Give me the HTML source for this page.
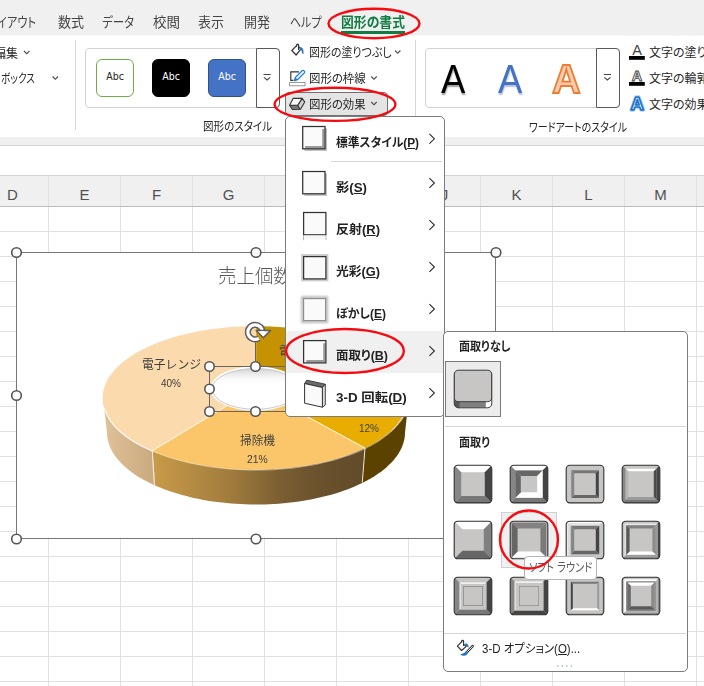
<!DOCTYPE html><html lang="ja"><head><meta charset="utf-8"><title>Excel</title><style>
html,body{margin:0;padding:0}
body{width:704px;height:686px;position:relative;overflow:hidden;background:#fff;
 font-family:"Liberation Sans","Noto Sans CJK JP",sans-serif;font-size:12px;color:#333}
.a{position:absolute}
.t{position:absolute;white-space:nowrap;transform-origin:0 50%}
.k{display:inline-block;transform-origin:0 50%}
.hdr{position:absolute;font-size:15px;color:#505050;top:186.4px;width:41px;text-align:center;line-height:17px;font-family:"Liberation Sans",sans-serif}
u{text-decoration:underline;text-underline-offset:1px}
svg{position:absolute;left:0;top:0;overflow:visible}
</style></head><body>
<div class="a" style="left:0;top:0;width:704px;height:35px;background:#f0f0f0"></div><div class="a" style="left:0;top:35px;width:704px;height:1px;background:#f7f7f7"></div>
<div class="a" style="left:0;top:137px;width:704px;height:8px;background:#f0f0f0"></div>
<div class="a" style="left:0;top:145px;width:704px;height:1px;background:#d2d2d2"></div>
<div class="a" style="left:0;top:175px;width:704px;height:1px;background:#d4d4d4"></div>
<div class="a" style="left:0;top:176px;width:704px;height:30px;background:#f0f0f0"></div>
<div class="a" style="left:0;top:206px;width:704px;height:1px;background:#bcbcbc"></div>
<div class="a" style="left:48px;top:176px;width:1px;height:30px;background:#e2e2e2"></div><div class="a" style="left:48px;top:207px;width:1px;height:479px;background:#e1e1e1"></div><div class="a" style="left:120px;top:176px;width:1px;height:30px;background:#e2e2e2"></div><div class="a" style="left:120px;top:207px;width:1px;height:479px;background:#e1e1e1"></div><div class="a" style="left:192px;top:176px;width:1px;height:30px;background:#e2e2e2"></div><div class="a" style="left:192px;top:207px;width:1px;height:479px;background:#e1e1e1"></div><div class="a" style="left:264px;top:176px;width:1px;height:30px;background:#e2e2e2"></div><div class="a" style="left:264px;top:207px;width:1px;height:479px;background:#e1e1e1"></div><div class="a" style="left:336px;top:176px;width:1px;height:30px;background:#e2e2e2"></div><div class="a" style="left:336px;top:207px;width:1px;height:479px;background:#e1e1e1"></div><div class="a" style="left:408px;top:176px;width:1px;height:30px;background:#e2e2e2"></div><div class="a" style="left:408px;top:207px;width:1px;height:479px;background:#e1e1e1"></div><div class="a" style="left:480px;top:176px;width:1px;height:30px;background:#e2e2e2"></div><div class="a" style="left:480px;top:207px;width:1px;height:479px;background:#e1e1e1"></div><div class="a" style="left:552px;top:176px;width:1px;height:30px;background:#e2e2e2"></div><div class="a" style="left:552px;top:207px;width:1px;height:479px;background:#e1e1e1"></div><div class="a" style="left:624px;top:176px;width:1px;height:30px;background:#e2e2e2"></div><div class="a" style="left:624px;top:207px;width:1px;height:479px;background:#e1e1e1"></div><div class="a" style="left:696px;top:176px;width:1px;height:30px;background:#e2e2e2"></div><div class="a" style="left:696px;top:207px;width:1px;height:479px;background:#e1e1e1"></div><div class="a" style="left:0;top:231px;width:704px;height:1px;background:#e1e1e1"></div><div class="a" style="left:0;top:256px;width:704px;height:1px;background:#e1e1e1"></div><div class="a" style="left:0;top:281px;width:704px;height:1px;background:#e1e1e1"></div><div class="a" style="left:0;top:306px;width:704px;height:1px;background:#e1e1e1"></div><div class="a" style="left:0;top:331px;width:704px;height:1px;background:#e1e1e1"></div><div class="a" style="left:0;top:356px;width:704px;height:1px;background:#e1e1e1"></div><div class="a" style="left:0;top:381px;width:704px;height:1px;background:#e1e1e1"></div><div class="a" style="left:0;top:406px;width:704px;height:1px;background:#e1e1e1"></div><div class="a" style="left:0;top:431px;width:704px;height:1px;background:#e1e1e1"></div><div class="a" style="left:0;top:456px;width:704px;height:1px;background:#e1e1e1"></div><div class="a" style="left:0;top:481px;width:704px;height:1px;background:#e1e1e1"></div><div class="a" style="left:0;top:506px;width:704px;height:1px;background:#e1e1e1"></div><div class="a" style="left:0;top:531px;width:704px;height:1px;background:#e1e1e1"></div><div class="a" style="left:0;top:556px;width:704px;height:1px;background:#e1e1e1"></div><div class="a" style="left:0;top:581px;width:704px;height:1px;background:#e1e1e1"></div><div class="a" style="left:0;top:606px;width:704px;height:1px;background:#e1e1e1"></div><div class="a" style="left:0;top:631px;width:704px;height:1px;background:#e1e1e1"></div><div class="a" style="left:0;top:656px;width:704px;height:1px;background:#e1e1e1"></div><div class="a" style="left:0;top:681px;width:704px;height:1px;background:#e1e1e1"></div>
<div class="hdr" style="left:-8px">D</div>
<div class="hdr" style="left:64px">E</div>
<div class="hdr" style="left:136px">F</div>
<div class="hdr" style="left:208px">G</div>
<div class="hdr" style="left:280px">H</div>
<div class="hdr" style="left:352px">I</div>
<div class="hdr" style="left:424px">J</div>
<div class="hdr" style="left:496px">K</div>
<div class="hdr" style="left:568px">L</div>
<div class="hdr" style="left:640px">M</div>
<div id="t1" class="t" style="left:-3px;top:12.6px;height:20px;line-height:20px;font-size:13.3px;color:#444;transform:scaleX(0.8421);font-feature-settings:'palt' 1;">イアウト</div>
<div id="t2" class="t" style="left:58px;top:12.6px;height:20px;line-height:20px;font-size:13.3px;color:#444;transform:scaleX(0.9777);font-feature-settings:'palt' 1;">数式</div>
<div id="t3" class="t" style="left:102px;top:12.6px;height:20px;line-height:20px;font-size:13.3px;color:#444;transform:scaleX(0.8609);font-feature-settings:'palt' 1;">データ</div>
<div id="t4" class="t" style="left:153px;top:12.6px;height:20px;line-height:20px;font-size:13.3px;color:#444;transform:scaleX(1.0153);font-feature-settings:'palt' 1;">校閲</div>
<div id="t5" class="t" style="left:198px;top:12.6px;height:20px;line-height:20px;font-size:13.3px;color:#444;transform:scaleX(0.9777);font-feature-settings:'palt' 1;">表示</div>
<div id="t6" class="t" style="left:244px;top:12.6px;height:20px;line-height:20px;font-size:13.3px;color:#444;transform:scaleX(0.9777);font-feature-settings:'palt' 1;">開発</div>
<div id="t7" class="t" style="left:289.5px;top:12.6px;height:20px;line-height:20px;font-size:13.3px;color:#444;transform:scaleX(0.8256);font-feature-settings:'palt' 1;">ヘルプ</div>
<div id="t8" class="t" style="left:341px;top:12.6px;height:20px;line-height:20px;font-size:13.3px;color:#107c41;font-weight:bold;transform:scaleX(0.9651);font-feature-settings:'palt' 1;">図形の書式</div>
<div class="a" style="left:341px;top:31px;width:64px;height:3px;background:#107c41"></div>
<div id="t9" class="t" style="left:-6px;top:44.7px;height:18px;line-height:18px;font-size:12px;color:#262626;transform:scaleX(0.9993);font-feature-settings:'palt' 1;">編集</div>
<div id="t10" class="t" style="left:1px;top:70.2px;height:18px;line-height:18px;font-size:12px;color:#262626;transform:scaleX(0.8050);font-feature-settings:'palt' 1;">ボックス</div>
<div class="a" style="left:75px;top:40px;width:1px;height:90px;background:#d6d6d6"></div>
<div class="a" style="left:415px;top:40px;width:1px;height:90px;background:#d6d6d6"></div>
<div class="a" style="left:85px;top:48px;width:193px;height:58px;border:1px solid #d2d2d2;border-radius:4px;background:#fff"></div>
<div class="a" style="left:256px;top:48px;width:22px;height:58px;border:1px solid #5a5a5a;border-radius:0 4px 4px 0;background:#fff"></div>
<div class="a" style="left:96px;top:59px;width:36px;height:36px;border:1px solid #70ad47;border-radius:6px;background:#fff;color:#222;font-size:10.5px;line-height:33.5px;text-align:center;font-family:'DejaVu Sans Condensed','Liberation Sans',sans-serif">Abc</div>
<div class="a" style="left:152px;top:59px;width:36px;height:36px;border:1px solid #000;border-radius:6px;background:#000;color:#fff;font-size:10.5px;line-height:33.5px;text-align:center;font-family:'DejaVu Sans Condensed','Liberation Sans',sans-serif">Abc</div>
<div class="a" style="left:208px;top:59px;width:36px;height:36px;border:1px solid #2f528f;border-radius:6px;background:#4472c4;color:#fff;font-size:10.5px;line-height:33.5px;text-align:center;font-family:'DejaVu Sans Condensed','Liberation Sans',sans-serif">Abc</div>
<div id="t11" class="t" style="left:203px;top:118.2px;height:18px;line-height:18px;font-size:12px;color:#262626;transform:scaleX(0.8772);font-feature-settings:'palt' 1;">図形のスタイル</div>
<div id="t12" class="t" style="left:309.3px;top:44.2px;height:18px;line-height:18px;font-size:12px;color:#262626;transform:scaleX(0.9135);font-feature-settings:'palt' 1;">図形の塗りつぶし</div>
<div id="t13" class="t" style="left:309.3px;top:70.2px;height:18px;line-height:18px;font-size:12px;color:#262626;transform:scaleX(0.9517);font-feature-settings:'palt' 1;">図形の枠線</div>
<div class="a" style="left:285px;top:92px;width:103px;height:24px;border:1px solid #707070;border-radius:4px;background:#e4e4e4;box-sizing:border-box"></div>
<div id="t14" class="t" style="left:309.3px;top:96.0px;height:18px;line-height:18px;font-size:12px;color:#262626;transform:scaleX(0.9517);font-feature-settings:'palt' 1;">図形の効果</div>
<div class="a" style="left:425px;top:48px;width:193px;height:58px;border:1px solid #d2d2d2;border-radius:4px;background:#fff"></div>
<div class="a" style="left:596px;top:48px;width:22px;height:58px;border:1px solid #5a5a5a;border-radius:0 4px 4px 0;background:#fff"></div>
<div id="t15" class="t" style="left:441.2px;top:48.7px;height:61px;line-height:61px;font-size:40.5px;color:#000;font-family:'Liberation Sans',sans-serif;transform:scaleX(.9);text-shadow:.5px 1.5px 1.5px rgba(0,0,0,.38)">A</div>
<div id="t16" class="t" style="left:498.2px;top:48.7px;height:61px;line-height:61px;font-size:40.5px;color:#4472c4;font-family:'Liberation Sans',sans-serif;transform:scaleX(.9);text-shadow:.5px 1.5px 1.5px rgba(60,90,160,.38)">A</div>
<div id="t17" class="t" style="left:552.2px;top:48.7px;height:61px;line-height:61px;font-size:40.5px;color:#f8cbad;font-weight:bold;font-family:'Liberation Sans',sans-serif;transform:scaleX(.98);-webkit-text-stroke:1.8px #ed7d31">A</div>
<div id="t18" class="t" style="left:529px;top:119.2px;height:18px;line-height:18px;font-size:12px;color:#262626;transform:scaleX(0.8294);font-feature-settings:'palt' 1;">ワードアートのスタイル</div>
<div id="t19" class="t" style="left:649px;top:43.6px;height:18px;line-height:18px;font-size:12px;color:#262626;font-feature-settings:'palt' 1;">文字の塗りつぶし</div>
<div id="t20" class="t" style="left:649px;top:69.7px;height:18px;line-height:18px;font-size:12px;color:#262626;font-feature-settings:'palt' 1;">文字の輪郭</div>
<div id="t21" class="t" style="left:649px;top:95.7px;height:18px;line-height:18px;font-size:12px;color:#262626;font-feature-settings:'palt' 1;">文字の効果</div>
<svg width="704" height="686" viewBox="0 0 704 686">
<path d="M24 51 L26.7 53.8 L29.4 51" fill="none" stroke="#444" stroke-width="1.1"/>
<path d="M52.6 76.5 L55.300000000000004 79.3 L58.0 76.5" fill="none" stroke="#444" stroke-width="1.1"/>
<path d="M395 50.5 L397.7 53.3 L400.4 50.5" fill="none" stroke="#444" stroke-width="1.1"/>
<path d="M371.3 76.5 L374.0 79.3 L376.7 76.5" fill="none" stroke="#444" stroke-width="1.1"/>
<path d="M371.3 102 L374.0 104.8 L376.7 102" fill="none" stroke="#444" stroke-width="1.1"/>
<path d="M263.5 74.5 h7.2" stroke="#444" stroke-width="1"/>
<path d="M264.0 77.3 L267.1 80 L270.2 77.3" fill="none" stroke="#444" stroke-width="1.1"/>
<path d="M603.8 74.5 h7.2" stroke="#444" stroke-width="1"/>
<path d="M604.3 77.3 L607.4 80 L610.5 77.3" fill="none" stroke="#444" stroke-width="1.1"/>
<path d="M296.6 45.6 L291.8 50.5 L296.1 55 L301 48.9 L298.6 46.8" fill="none" stroke="#333" stroke-width="1.2" stroke-linejoin="round" stroke-linecap="round"/>
<path d="M296.6 46.2 V45.2 Q296.6 44.2 297.6 44.2 Q298.6 44.2 298.6 45.2 V49.4" fill="none" stroke="#333" stroke-width="1.2" stroke-linecap="round"/>
<path d="M300.6 47.6 Q303.4 48 303 53.6 Q302.2 50 300.4 49 Z" fill="#1a72c7" stroke="#1a72c7" stroke-width=".9" stroke-linejoin="round"/>
<path d="M299 71.8 H290.8 V80.4 H293.4" fill="none" stroke="#333" stroke-width="1.15"/>
<path d="M294.4 80.8 l1 -3.4 l6.8 -6.8 c1.1-1 3.2 1.1 2.2 2.2 l-6.8 6.8 z" fill="#e6f1fb" stroke="#1a78d0" stroke-width="1.2" stroke-linejoin="round"/>
<path d="M294.4 80.8 l1 -3.4 l2.4 2.4 z" fill="#1a78d0"/>
<rect x="289.6" y="82.4" width="15.4" height="3.4" fill="#fff" stroke="#8a8a8a" stroke-width=".9"/>
<path d="M289.6 105.3 L297.7 105.3 L299.9 109.3 L292.4 109.5 Z" fill="#787878" stroke="#333" stroke-width="1.1" stroke-linejoin="round"/>
<path d="M297.7 105.3 L302.1 98.4 L304.7 101.9 L300.5 109.3 L299.9 109.3 Z" fill="#d0d0d0" stroke="#333" stroke-width="1.1" stroke-linejoin="round"/>
<path d="M293.1 98.4 L302.1 98.4 L297.7 105.3 L289.6 105.3 Z" fill="#fafafa" stroke="#333" stroke-width="1.1" stroke-linejoin="round"/>
<rect x="629" y="56" width="15.8" height="3.8" fill="#000"/><rect x="629" y="82" width="15.8" height="3.8" fill="#000"/>
<text x="637" y="54.6" font-family="Liberation Sans, sans-serif" font-size="14.5" text-anchor="middle" fill="#444">A</text>
<text x="637" y="80.6" font-family="Liberation Sans, sans-serif" font-size="14.5" font-weight="bold" text-anchor="middle" fill="#fff" stroke="#444" stroke-width=".9">A</text>
<text x="637.2" y="110" font-family="Liberation Sans, sans-serif" font-size="18.5" font-weight="bold" text-anchor="middle" fill="#fff" stroke="#1e7fd6" stroke-width="3.4" stroke-opacity=".35" stroke-linejoin="round">A</text>
<text x="637.2" y="110" font-family="Liberation Sans, sans-serif" font-size="18.5" font-weight="bold" text-anchor="middle" fill="#fff" stroke="#1873cc" stroke-width="1.7" stroke-linejoin="round">A</text>
</svg>
<div class="a" style="left:16px;top:252px;width:480px;height:287px;background:#fff;border:1px solid #767676;box-sizing:border-box"></div>
<svg width="704" height="686" viewBox="0 0 704 686">
<defs>
<linearGradient id="gL" gradientUnits="userSpaceOnUse" x1="103" y1="0" x2="154" y2="0"><stop offset="0" stop-color="#e0c299"/><stop offset="1" stop-color="#caa97e"/></linearGradient>
<linearGradient id="gM" gradientUnits="userSpaceOnUse" x1="153" y1="0" x2="364" y2="0"><stop offset="0" stop-color="#c99b49"/><stop offset=".35" stop-color="#a37d3e"/><stop offset=".6" stop-color="#7b5f33"/><stop offset=".8" stop-color="#69512d"/><stop offset="1" stop-color="#634b2a"/></linearGradient>
<linearGradient id="gH" x1="0" y1="0" x2="0" y2="1"><stop offset="0" stop-color="#cfcfcf"/><stop offset=".08" stop-color="#e2e2e2"/><stop offset=".22" stop-color="#f7f7f7"/><stop offset=".36" stop-color="#fff"/><stop offset="1" stop-color="#fff"/></linearGradient>
<clipPath id="cf"><rect x="17" y="253" width="478" height="285"/></clipPath>
</defs>
<g clip-path="url(#cf)">
<path d="M103.0 397.4 L103.0 398.6 L103.1 399.9 L103.2 401.1 L103.4 402.4 L103.6 403.6 L103.8 404.8 L104.1 406.1 L104.5 407.3 L104.8 408.5 L105.3 409.8 L105.7 411.0 L106.3 412.2 L106.8 413.4 L107.4 414.6 L108.1 415.8 L108.8 417.0 L109.5 418.2 L110.3 419.4 L111.1 420.6 L112.0 421.7 L112.9 422.9 L113.9 424.1 L114.9 425.2 L115.9 426.4 L117.0 427.5 L118.1 428.6 L119.3 429.7 L120.5 430.8 L121.7 431.9 L123.0 433.0 L124.4 434.1 L125.7 435.1 L127.1 436.2 L128.6 437.2 L130.0 438.3 L131.6 439.3 L133.1 440.3 L134.7 441.3 L136.3 442.3 L138.0 443.2 L139.7 444.2 L141.4 445.1 L143.2 446.0 L145.0 446.9 L146.8 447.8 L148.7 448.7 L150.6 449.6 L152.5 450.4 L155.2 485.5 L153.3 484.7 L151.5 483.8 L149.7 482.9 L147.9 482.0 L146.1 481.1 L144.4 480.2 L142.7 479.3 L141.1 478.3 L139.5 477.4 L137.9 476.4 L136.3 475.4 L134.8 474.4 L133.3 473.4 L131.9 472.3 L130.5 471.3 L129.1 470.2 L127.8 469.2 L126.5 468.1 L125.3 467.0 L124.0 465.9 L122.9 464.8 L121.7 463.7 L120.6 462.6 L119.6 461.5 L118.6 460.3 L117.6 459.2 L116.7 458.0 L115.8 456.8 L114.9 455.7 L114.1 454.5 L113.4 453.3 L112.6 452.1 L112.0 450.9 L111.3 449.7 L110.7 448.5 L110.2 447.3 L109.7 446.1 L109.2 444.9 L108.8 443.6 L108.4 442.4 L108.1 441.2 L107.8 439.9 L107.6 438.7 L107.4 437.5 L107.2 436.2 L107.1 435.0 L107.0 433.7 L107.0 432.5Z" fill="url(#gL)"/>
<path d="M152.5 450.4 L156.2 452.0 L159.9 453.4 L163.8 454.8 L167.7 456.2 L171.8 457.5 L175.9 458.7 L180.1 459.9 L184.4 461.0 L188.8 462.1 L193.2 463.1 L197.7 464.0 L202.2 464.8 L206.9 465.6 L211.5 466.3 L216.2 466.9 L221.0 467.5 L225.8 468.0 L230.6 468.4 L235.4 468.7 L240.3 469.0 L245.1 469.2 L250.0 469.3 L254.9 469.4 L259.8 469.4 L264.7 469.3 L269.6 469.1 L274.5 468.9 L279.3 468.6 L284.1 468.2 L288.9 467.7 L293.7 467.2 L298.4 466.6 L303.1 465.9 L307.7 465.2 L312.3 464.3 L316.8 463.5 L321.3 462.5 L325.7 461.5 L330.0 460.4 L334.3 459.3 L338.4 458.1 L342.5 456.8 L346.5 455.5 L350.4 454.1 L354.2 452.6 L357.9 451.1 L361.5 449.5 L365.0 447.9 L362.2 483.0 L358.8 484.6 L355.2 486.2 L351.6 487.7 L347.9 489.2 L344.1 490.6 L340.2 491.9 L336.3 493.2 L332.2 494.4 L328.1 495.5 L323.9 496.6 L319.6 497.6 L315.3 498.6 L310.8 499.4 L306.4 500.3 L301.9 501.0 L297.3 501.7 L292.7 502.3 L288.1 502.8 L283.4 503.3 L278.7 503.7 L274.0 504.0 L269.2 504.2 L264.5 504.4 L259.7 504.5 L255.0 504.5 L250.2 504.4 L245.4 504.3 L240.7 504.1 L235.9 503.8 L231.2 503.5 L226.5 503.1 L221.9 502.6 L217.3 502.0 L212.7 501.4 L208.1 500.7 L203.7 499.9 L199.2 499.1 L194.8 498.2 L190.5 497.2 L186.3 496.1 L182.1 495.0 L178.0 493.8 L174.0 492.6 L170.0 491.3 L166.2 489.9 L162.4 488.5 L158.8 487.1 L155.2 485.5Z" fill="url(#gM)"/>
<path d="M365.0 447.9 L366.7 447.1 L368.4 446.2 L370.1 445.4 L371.7 444.5 L373.3 443.6 L374.9 442.7 L376.5 441.8 L378.0 440.9 L379.4 439.9 L380.9 439.0 L382.3 438.0 L383.7 437.1 L385.0 436.1 L386.4 435.1 L387.6 434.1 L388.9 433.1 L390.1 432.1 L391.3 431.0 L392.4 430.0 L393.5 429.0 L394.6 427.9 L395.6 426.8 L396.6 425.8 L397.6 424.7 L398.5 423.6 L399.4 422.5 L400.2 421.4 L401.0 420.3 L401.8 419.2 L402.5 418.1 L403.2 417.0 L403.9 415.9 L404.5 414.7 L405.1 413.6 L405.6 412.5 L406.1 411.3 L406.6 410.2 L407.0 409.0 L407.4 407.9 L407.7 406.7 L408.0 405.6 L408.3 404.4 L408.5 403.2 L408.7 402.1 L408.8 400.9 L408.9 399.7 L409.0 398.6 L409.0 397.4 L405.0 432.5 L405.0 433.7 L404.9 434.8 L404.8 436.0 L404.7 437.2 L404.5 438.3 L404.3 439.5 L404.0 440.7 L403.7 441.8 L403.4 443.0 L403.0 444.1 L402.6 445.3 L402.2 446.4 L401.7 447.6 L401.2 448.7 L400.6 449.8 L400.0 451.0 L399.4 452.1 L398.7 453.2 L398.0 454.3 L397.2 455.4 L396.5 456.5 L395.6 457.6 L394.8 458.7 L393.9 459.8 L392.9 460.9 L392.0 461.9 L391.0 463.0 L389.9 464.1 L388.8 465.1 L387.7 466.1 L386.6 467.2 L385.4 468.2 L384.2 469.2 L382.9 470.2 L381.7 471.2 L380.4 472.2 L379.0 473.1 L377.6 474.1 L376.2 475.0 L374.8 476.0 L373.3 476.9 L371.8 477.8 L370.3 478.7 L368.7 479.6 L367.1 480.5 L365.5 481.3 L363.8 482.2 L362.2 483.0Z" fill="#5c4200"/>
<path d="M255.5 388.5 L256 326 A153 72 0 0 0 152 451 Z" fill="#fbdaad"/>
<path d="M255.5 388.5 L152 451 A153 72 0 0 0 365 448 Z" fill="#fbc669"/>
<path d="M255.5 388.5 L365 448 A153 72 0 0 0 407.5 399 Z" fill="#e9ad02"/>
<path d="M255.5 388.5 L407.5 399 A153 72 0 0 0 256 326 Z" fill="#c59302"/>
<path d="M104.4 408.5 A153 72 0 0 0 152 451" fill="none" stroke="#fff" stroke-opacity=".9" stroke-width="1.1"/>
<path d="M152 451 A153 72 0 0 0 408.9 401" fill="none" stroke="#fff" stroke-opacity=".45" stroke-width="1"/>
<path d="M255.5 388.5 L152 451" stroke="#fff" stroke-opacity=".85" stroke-width="1" fill="none"/>
<path d="M255.5 388.5 L365 448" stroke="#fff" stroke-opacity=".85" stroke-width="1" fill="none"/>
<path d="M255.5 388.5 L407.5 399" stroke="#fff" stroke-opacity=".85" stroke-width="1" fill="none"/>
<path d="M255.5 388.5 L256 326" stroke="#fbe6c8" stroke-opacity=".6" stroke-width="1" fill="none"/>
<path d="M152.3 451 L154.3 485" stroke="#fff" stroke-opacity=".8" stroke-width="1" fill="none"/>
<path d="M365 448 L362.3 482.5" stroke="#fff" stroke-opacity=".8" stroke-width="1" fill="none"/>
<ellipse cx="255.5" cy="388.6" rx="45.4" ry="22.3" fill="#fff"/>
<ellipse cx="255.5" cy="388.9" rx="43.4" ry="20.4" fill="url(#gH)" stroke="#c4c4c4" stroke-width=".9"/>
</g></svg>
<div id="t22" class="t" style="left:218.4px;top:262.6px;height:28px;line-height:28px;font-size:18.8px;color:#595959;transform:scaleX(0.9824);font-feature-settings:'palt' 1;font-weight:300;">売上個数</div>
<div id="t23" class="t" style="left:141.75px;top:356.0px;height:18px;line-height:18px;font-size:12px;color:#404040;transform:scaleX(0.9831);">電子レンジ</div>
<div id="t24" class="t" style="left:161px;top:375.3px;height:16px;line-height:16px;font-size:10.5px;color:#404040;transform:scaleX(0.9517);font-family:'Liberation Sans',sans-serif;">40%</div>
<div id="t25" class="t" style="left:240px;top:432.0px;height:18px;line-height:18px;font-size:12px;color:#404040;transform:scaleX(0.9718);">掃除機</div>
<div id="t26" class="t" style="left:246.8px;top:451.3px;height:16px;line-height:16px;font-size:10.5px;color:#404040;transform:scaleX(0.9850);font-family:'Liberation Sans',sans-serif;">21%</div>
<div id="t27" class="t" style="left:358.6px;top:420.2px;height:16px;line-height:16px;font-size:10.5px;color:#404040;transform:scaleX(0.9517);font-family:'Liberation Sans',sans-serif;">12%</div>
<div id="t28" class="t" style="left:279px;top:342.5px;height:18px;line-height:18px;font-size:12px;color:#404040;">電気ポット</div>
<svg width="704" height="686" viewBox="0 0 704 686">
<rect x="209.5" y="366.5" width="92" height="45" fill="none" stroke="#666" stroke-width="1"/>
<path d="M255.5 366 V342" stroke="#666" stroke-width="1"/>
<circle cx="209.5" cy="366.5" r="4.7" fill="#fff" stroke="#555" stroke-width="1.6"/>
<circle cx="209.5" cy="389" r="4.7" fill="#fff" stroke="#555" stroke-width="1.6"/>
<circle cx="209.5" cy="411.5" r="4.7" fill="#fff" stroke="#555" stroke-width="1.6"/>
<circle cx="255.5" cy="366.5" r="4.7" fill="#fff" stroke="#555" stroke-width="1.6"/>
<circle cx="255.5" cy="411.5" r="4.7" fill="#fff" stroke="#555" stroke-width="1.6"/>
<circle cx="301.5" cy="366.5" r="4.7" fill="#fff" stroke="#555" stroke-width="1.6"/>
<circle cx="301.5" cy="389" r="4.7" fill="#fff" stroke="#555" stroke-width="1.6"/>
<circle cx="301.5" cy="411.5" r="4.7" fill="#fff" stroke="#555" stroke-width="1.6"/>
<path d="M262.5 332.6 A7.3 7.3 0 1 0 258.9 338.4" fill="none" stroke="#5e5e5e" stroke-width="6.2"/>
<path d="M262.5 332.6 A7.3 7.3 0 1 0 258.9 338.4" fill="none" stroke="#fff" stroke-width="3.2"/>
<path d="M256.2 330.4 H270.6 L263.3 337.8 Z" fill="#fff" stroke="#5e5e5e" stroke-width="1.5" stroke-linejoin="round"/>
<path d="M260.8 331 h3.4 v2.4 h-3.4z" fill="#fff"/>
<circle cx="16.5" cy="252.5" r="4.8" fill="#fff" stroke="#555" stroke-width="1.6"/>
<circle cx="256" cy="252.5" r="4.8" fill="#fff" stroke="#555" stroke-width="1.6"/>
<circle cx="496" cy="252.5" r="4.8" fill="#fff" stroke="#555" stroke-width="1.6"/>
<circle cx="16.5" cy="395.5" r="4.8" fill="#fff" stroke="#555" stroke-width="1.6"/>
<circle cx="496" cy="395.5" r="4.8" fill="#fff" stroke="#555" stroke-width="1.6"/>
<circle cx="16.5" cy="539" r="4.8" fill="#fff" stroke="#555" stroke-width="1.6"/>
<circle cx="256" cy="539" r="4.8" fill="#fff" stroke="#555" stroke-width="1.6"/>
<circle cx="496" cy="539" r="4.8" fill="#fff" stroke="#555" stroke-width="1.6"/>
</svg>
<div class="a" style="left:285px;top:116px;width:160px;height:301px;background:#fff;border:1px solid #7c7c7c;border-radius:5px;box-sizing:border-box"></div>
<div class="a" style="left:286px;top:331px;width:158px;height:42px;background:#f0f0f0"></div>
<div class="a" style="left:331px;top:161px;width:111px;height:1px;background:#d6d6d6"></div>
<div id="t29" class="t" style="left:336px;top:133.9px;height:18px;line-height:18px;font-size:12px;color:#222;font-weight:bold;transform:scaleX(0.9795);font-feature-settings:'palt' 1;">標準スタイル(<u>P</u>)</div>
<div id="t30" class="t" style="left:336px;top:178.9px;height:18px;line-height:18px;font-size:12px;color:#222;font-weight:bold;transform:scaleX(1.1065);font-feature-settings:'palt' 1;">影(<u>S</u>)</div>
<div id="t31" class="t" style="left:336px;top:220.9px;height:18px;line-height:18px;font-size:12px;color:#222;font-weight:bold;transform:scaleX(1.0818);font-feature-settings:'palt' 1;">反射(<u>R</u>)</div>
<div id="t32" class="t" style="left:336px;top:262.9px;height:18px;line-height:18px;font-size:12px;color:#222;font-weight:bold;transform:scaleX(1.0642);font-feature-settings:'palt' 1;">光彩(<u>G</u>)</div>
<div id="t33" class="t" style="left:336px;top:304.9px;height:18px;line-height:18px;font-size:12px;color:#222;font-weight:bold;transform:scaleX(0.9941);font-feature-settings:'palt' 1;">ぼかし(<u>E</u>)</div>
<div id="t34" class="t" style="left:336px;top:346.6px;height:18px;line-height:18px;font-size:12px;color:#222;font-weight:bold;transform:scaleX(1.0374);font-feature-settings:'palt' 1;">面取り(<u>B</u>)</div>
<div id="t35" class="t" style="left:336px;top:388.6px;height:18px;line-height:18px;font-size:12px;color:#222;font-weight:bold;transform:scaleX(1.1169);font-feature-settings:'palt' 1;">3-D 回転(<u>D</u>)</div>
<svg width="704" height="686" viewBox="0 0 704 686">
<defs><filter id="bl" x="-20%" y="-20%" width="140%" height="140%"><feGaussianBlur stdDeviation="1"/></filter></defs>
<rect x="304.4" y="128.3" width="22.6" height="22.6" fill="#bdbdbd"/>
<rect x="302.7" y="126.5" width="22.3" height="22.3" fill="#fafafa"/>
<path d="M322.2 129 h2.4 v19.4 h-19.6 v-2.5 h17.2 z" fill="#9a9a9a"/>
<rect x="302.7" y="126.5" width="22.3" height="22.3" fill="none" stroke="#333" stroke-width="1.25"/>
<rect x="304.4" y="173.3" width="22.6" height="22.6" fill="#c2c2c2"/>
<rect x="302.7" y="171.5" width="22.3" height="22.3" fill="#fafafa"/>
<rect x="302.7" y="171.5" width="22.3" height="22.3" fill="none" stroke="#333" stroke-width="1.25"/>
<rect x="303.6" y="212.5" width="22.3" height="22.3" fill="#fafafa"/>
<rect x="303.6" y="212.5" width="22.3" height="22.3" fill="none" stroke="#333" stroke-width="1.25"/>
<path d="M303.6 235.6 v4.6 M325.9 235.6 v4.6" stroke="#b0b0b0" stroke-width="1"/><rect x="304.1" y="235.5" width="21.3" height="4" fill="#f7f7f7"/>
<rect x="301.1" y="254.1" width="27.3" height="27.3" fill="#cdcdcb"/>
<rect x="303.6" y="256.6" width="22.3" height="22.3" fill="#fafafa"/>
<rect x="303.6" y="256.6" width="22.3" height="22.3" fill="none" stroke="#333" stroke-width="1.25"/>
<rect x="302.6" y="297.6" width="24" height="24" fill="none" stroke="#bdbdbd" stroke-width="3" filter="url(#bl)"/>
<rect x="303.6" y="298.6" width="22" height="22" fill="#fafafa" stroke="#8c8c8c" stroke-width="1.1"/>
<rect x="303.6" y="340.6" width="22.3" height="22.3" fill="#fafafa"/>
<path d="M323.2 343.2 h2.3 v19.2 h-19.2 v-2.4 h16.9 z" fill="#9a9a9a"/>
<rect x="303.6" y="340.6" width="22.3" height="22.3" fill="none" stroke="#333" stroke-width="1.25"/>
<path d="M304.6 383.5 L306.8 380.2 L325.3 384.2 L322.4 387.5 Z" fill="#6b6b6b" stroke="#333" stroke-width=".9" stroke-linejoin="round"/>
<path d="M322.4 387.5 L325.3 384.2 L325.3 405 L322.4 407.2 Z" fill="#dedede" stroke="#333" stroke-width=".9" stroke-linejoin="round"/>
<path d="M304.6 383.5 L322.4 387.5 L322.4 407.2 L304.6 403.2 Z" fill="#fafafa" stroke="#333" stroke-width="1" stroke-linejoin="round"/>
<path d="M429.4 133.9 L434.4 138.8 L429.4 143.70000000000002" fill="none" stroke="#333" stroke-width="1.15"/>
<path d="M429.4 178.1 L434.4 183 L429.4 187.9" fill="none" stroke="#333" stroke-width="1.15"/>
<path d="M429.4 220.1 L434.4 225 L429.4 229.9" fill="none" stroke="#333" stroke-width="1.15"/>
<path d="M429.4 262.1 L434.4 267 L429.4 271.9" fill="none" stroke="#333" stroke-width="1.15"/>
<path d="M429.4 304.1 L434.4 309 L429.4 313.9" fill="none" stroke="#333" stroke-width="1.15"/>
<path d="M429.4 346.1 L434.4 351 L429.4 355.9" fill="none" stroke="#333" stroke-width="1.15"/>
<path d="M429.4 388.1 L434.4 393 L429.4 397.9" fill="none" stroke="#333" stroke-width="1.15"/>
</svg>
<div class="a" style="left:443px;top:331px;width:245px;height:341px;background:#fff;border:1px solid #7c7c7c;border-radius:5px;box-sizing:border-box"></div>
<div id="t36" class="t" style="left:459px;top:338.2px;height:18px;line-height:18px;font-size:12px;color:#222;font-weight:bold;transform:scaleX(0.9238);font-feature-settings:'palt' 1;">面取りなし</div>
<div class="a" style="left:445px;top:361px;width:56px;height:56px;background:#ececec;border:1px solid #7a7a7a;box-sizing:border-box"></div>
<div class="a" style="left:445px;top:426px;width:241px;height:1px;background:#d6d6d6"></div>
<div id="t37" class="t" style="left:459px;top:433.8px;height:18px;line-height:18px;font-size:12px;color:#222;font-weight:bold;transform:scaleX(0.9262);font-feature-settings:'palt' 1;">面取り</div>
<div class="a" style="left:501px;top:512px;width:56px;height:56px;background:#f0f0f0;border:1px solid #cfcfcf;box-sizing:border-box"></div>
<svg width="704" height="686" viewBox="0 0 704 686">
<clipPath id="bc1"><rect x="454.2" y="465.3" width="37.6" height="37.6" rx="3.6"/></clipPath>
<g clip-path="url(#bc1)">
<rect x="454.2" y="465.3" width="37.6" height="37.6" fill="#c7c6c4"/>
<path d="M454.2 465.3 L491.8 465.3 L484.8 472.3 L461.2 472.3Z" fill="#ffffff"/>
<path d="M491.8 465.3 L491.8 502.90000000000003 L484.8 495.90000000000003 L484.8 472.3Z" fill="#444444"/>
<path d="M491.8 502.90000000000003 L454.2 502.90000000000003 L461.2 495.90000000000003 L484.8 495.90000000000003Z" fill="#777777"/>
<path d="M454.2 502.90000000000003 L454.2 465.3 L461.2 472.3 L461.2 495.90000000000003Z" fill="#868686"/>
</g>
<rect x="454.2" y="465.3" width="37.6" height="37.6" rx="3.6" fill="none" stroke="#303030" stroke-width="1.1"/>
<clipPath id="bc2"><rect x="510.2" y="465.3" width="37.6" height="37.6" rx="3.6"/></clipPath>
<g clip-path="url(#bc2)">
<rect x="510.2" y="465.3" width="37.6" height="37.6" fill="#c7c6c4"/>
<path d="M510.2 465.3 L547.8 465.3 L542.5999999999999 470.5 L515.4 470.5Z" fill="#ffffff"/>
<path d="M547.8 465.3 L547.8 502.90000000000003 L542.5999999999999 497.70000000000005 L542.5999999999999 470.5Z" fill="#444444"/>
<path d="M547.8 502.90000000000003 L510.2 502.90000000000003 L515.4 497.70000000000005 L542.5999999999999 497.70000000000005Z" fill="#777777"/>
<path d="M510.2 502.90000000000003 L510.2 465.3 L515.4 470.5 L515.4 497.70000000000005Z" fill="#868686"/>
<path d="M515.4 470.5 L542.5999999999999 470.5 L537.1999999999999 475.90000000000003 L520.8 475.90000000000003Z" fill="#666666"/>
<path d="M542.5999999999999 470.5 L542.5999999999999 497.70000000000005 L537.1999999999999 492.3 L537.1999999999999 475.90000000000003Z" fill="#ffffff"/>
<path d="M542.5999999999999 497.70000000000005 L515.4 497.70000000000005 L520.8 492.3 L537.1999999999999 492.3Z" fill="#ffffff"/>
<path d="M515.4 497.70000000000005 L515.4 470.5 L520.8 475.90000000000003 L520.8 492.3Z" fill="#666666"/>
</g>
<rect x="510.2" y="465.3" width="37.6" height="37.6" rx="3.6" fill="none" stroke="#303030" stroke-width="1.1"/>
<clipPath id="bc3"><rect x="566.2" y="465.3" width="37.6" height="37.6" rx="3.6"/></clipPath>
<g clip-path="url(#bc3)">
<rect x="566.2" y="465.3" width="37.6" height="37.6" fill="#c7c6c4"/>
<path d="M571.2 470.3 L598.8000000000001 470.3 L595.8000000000001 473.3 L574.2 473.3Z" fill="#777777"/>
<path d="M598.8000000000001 470.3 L598.8000000000001 497.90000000000003 L595.8000000000001 494.90000000000003 L595.8000000000001 473.3Z" fill="#444444"/>
<path d="M598.8000000000001 497.90000000000003 L571.2 497.90000000000003 L574.2 494.90000000000003 L595.8000000000001 494.90000000000003Z" fill="#666666"/>
<path d="M571.2 497.90000000000003 L571.2 470.3 L574.2 473.3 L574.2 494.90000000000003Z" fill="#868686"/>
</g>
<rect x="566.2" y="465.3" width="37.6" height="37.6" rx="3.6" fill="none" stroke="#303030" stroke-width="1.1"/>
<clipPath id="bc4"><rect x="622.2" y="465.3" width="37.6" height="37.6" rx="3.6"/></clipPath>
<g clip-path="url(#bc4)">
<rect x="622.2" y="465.3" width="37.6" height="37.6" fill="#c7c6c4"/>
<path d="M622.2 465.3 L659.8000000000001 465.3 L656.4000000000001 468.7 L625.6 468.7Z" fill="#c7c6c4"/>
<path d="M659.8000000000001 465.3 L659.8000000000001 502.90000000000003 L656.4000000000001 499.50000000000006 L656.4000000000001 468.7Z" fill="#444444"/>
<path d="M659.8000000000001 502.90000000000003 L622.2 502.90000000000003 L625.6 499.50000000000006 L656.4000000000001 499.50000000000006Z" fill="#777777"/>
<path d="M622.2 502.90000000000003 L622.2 465.3 L625.6 468.7 L625.6 499.50000000000006Z" fill="#868686"/>
<path d="M625.6 468.7 L656.4000000000001 468.7 L653.8000000000001 471.3 L628.2 471.3Z" fill="#ffffff"/>
<path d="M656.4000000000001 468.7 L656.4000000000001 499.50000000000006 L653.8000000000001 496.90000000000003 L653.8000000000001 471.3Z" fill="#4a4a4a"/>
<path d="M656.4000000000001 499.50000000000006 L625.6 499.50000000000006 L628.2 496.90000000000003 L653.8000000000001 496.90000000000003Z" fill="#9a9a9a"/>
<path d="M625.6 499.50000000000006 L625.6 468.7 L628.2 471.3 L628.2 496.90000000000003Z" fill="#b4b4b4"/>
</g>
<rect x="622.2" y="465.3" width="37.6" height="37.6" rx="3.6" fill="none" stroke="#303030" stroke-width="1.1"/>
<clipPath id="bc5"><rect x="454.2" y="521.2" width="37.6" height="37.6" rx="3.6"/></clipPath>
<g clip-path="url(#bc5)">
<rect x="454.2" y="521.2" width="37.6" height="37.6" fill="#c7c6c4"/>
<path d="M454.2 521.2 L491.8 521.2 L483.8 529.2 L462.2 529.2Z" fill="#ffffff"/>
<path d="M491.8 521.2 L491.8 558.8000000000001 L483.8 550.8000000000001 L483.8 529.2Z" fill="#808080"/>
<path d="M491.8 558.8000000000001 L454.2 558.8000000000001 L462.2 550.8000000000001 L483.8 550.8000000000001Z" fill="#666666"/>
<path d="M454.2 558.8000000000001 L454.2 521.2 L462.2 529.2 L462.2 550.8000000000001Z" fill="#c7c6c4"/>
</g>
<rect x="454.2" y="521.2" width="37.6" height="37.6" rx="3.6" fill="none" stroke="#303030" stroke-width="1.1"/>
<clipPath id="bc6"><rect x="510.2" y="521.2" width="37.6" height="37.6" rx="3.6"/></clipPath>
<g clip-path="url(#bc6)">
<rect x="510.2" y="521.2" width="37.6" height="37.6" fill="#c7c6c4"/>
<path d="M510.2 521.2 L547.8 521.2 L546.4 522.6 L511.59999999999997 522.6Z" fill="#e2e2e2"/>
<path d="M547.8 521.2 L547.8 558.8000000000001 L546.4 557.4000000000001 L546.4 522.6Z" fill="#cfcfcf"/>
<path d="M547.8 558.8000000000001 L510.2 558.8000000000001 L511.59999999999997 557.4000000000001 L546.4 557.4000000000001Z" fill="#e2e2e2"/>
<path d="M510.2 558.8000000000001 L510.2 521.2 L511.59999999999997 522.6 L511.59999999999997 557.4000000000001Z" fill="#cfcfcf"/>
<path d="M511.59999999999997 522.6 L546.4 522.6 L540.4 528.6 L517.6 528.6Z" fill="#828282"/>
<path d="M546.4 522.6 L546.4 557.4000000000001 L540.4 551.4000000000001 L540.4 528.6Z" fill="#7a7a7a"/>
<path d="M546.4 557.4000000000001 L511.59999999999997 557.4000000000001 L517.6 551.4000000000001 L540.4 551.4000000000001Z" fill="#ffffff"/>
<path d="M511.59999999999997 557.4000000000001 L511.59999999999997 522.6 L517.6 528.6 L517.6 551.4000000000001Z" fill="#666666"/>
</g>
<rect x="510.2" y="521.2" width="37.6" height="37.6" rx="3.6" fill="none" stroke="#303030" stroke-width="1.1"/>
<clipPath id="bc7"><rect x="566.2" y="521.2" width="37.6" height="37.6" rx="3.6"/></clipPath>
<g clip-path="url(#bc7)">
<rect x="566.2" y="521.2" width="37.6" height="37.6" fill="#c7c6c4"/>
<path d="M566.2 521.2 L603.8000000000001 521.2 L601.4000000000001 523.6 L568.6 523.6Z" fill="#ffffff"/>
<path d="M603.8000000000001 521.2 L603.8000000000001 558.8000000000001 L601.4000000000001 556.4000000000001 L601.4000000000001 523.6Z" fill="#c7c6c4"/>
<path d="M603.8000000000001 558.8000000000001 L566.2 558.8000000000001 L568.6 556.4000000000001 L601.4000000000001 556.4000000000001Z" fill="#c7c6c4"/>
<path d="M566.2 558.8000000000001 L566.2 521.2 L568.6 523.6 L568.6 556.4000000000001Z" fill="#ececec"/>
<path d="M568.6 523.6 L601.4000000000001 523.6 L599.2 525.8000000000001 L570.8000000000001 525.8000000000001Z" fill="#e6e6e6"/>
<path d="M601.4000000000001 523.6 L601.4000000000001 556.4000000000001 L599.2 554.2 L599.2 525.8000000000001Z" fill="#c7c6c4"/>
<path d="M601.4000000000001 556.4000000000001 L568.6 556.4000000000001 L570.8000000000001 554.2 L599.2 554.2Z" fill="#c7c6c4"/>
<path d="M568.6 556.4000000000001 L568.6 523.6 L570.8000000000001 525.8000000000001 L570.8000000000001 554.2Z" fill="#dadada"/>
<path d="M570.8000000000001 525.8000000000001 L599.2 525.8000000000001 L595.8000000000001 529.2 L574.2 529.2Z" fill="#777777"/>
<path d="M599.2 525.8000000000001 L599.2 554.2 L595.8000000000001 550.8000000000001 L595.8000000000001 529.2Z" fill="#444444"/>
<path d="M599.2 554.2 L570.8000000000001 554.2 L574.2 550.8000000000001 L595.8000000000001 550.8000000000001Z" fill="#666666"/>
<path d="M570.8000000000001 554.2 L570.8000000000001 525.8000000000001 L574.2 529.2 L574.2 550.8000000000001Z" fill="#868686"/>
</g>
<rect x="566.2" y="521.2" width="37.6" height="37.6" rx="3.6" fill="none" stroke="#303030" stroke-width="1.1"/>
<clipPath id="bc8"><rect x="622.2" y="521.2" width="37.6" height="37.6" rx="3.6"/></clipPath>
<g clip-path="url(#bc8)">
<rect x="622.2" y="521.2" width="37.6" height="37.6" fill="#c7c6c4"/>
<path d="M622.2 521.2 L659.8000000000001 521.2 L657.6 523.4000000000001 L624.4000000000001 523.4000000000001Z" fill="#c7c6c4"/>
<path d="M659.8000000000001 521.2 L659.8000000000001 558.8000000000001 L657.6 556.6 L657.6 523.4000000000001Z" fill="#444444"/>
<path d="M659.8000000000001 558.8000000000001 L622.2 558.8000000000001 L624.4000000000001 556.6 L657.6 556.6Z" fill="#8a8a8a"/>
<path d="M622.2 558.8000000000001 L622.2 521.2 L624.4000000000001 523.4000000000001 L624.4000000000001 556.6Z" fill="#c7c6c4"/>
<path d="M624.4000000000001 523.4000000000001 L657.6 523.4000000000001 L655.8000000000001 525.2 L626.2 525.2Z" fill="#e6e6e6"/>
<path d="M657.6 523.4000000000001 L657.6 556.6 L655.8000000000001 554.8000000000001 L655.8000000000001 525.2Z" fill="#9a9a9a"/>
<path d="M657.6 556.6 L624.4000000000001 556.6 L626.2 554.8000000000001 L655.8000000000001 554.8000000000001Z" fill="#9a9a9a"/>
<path d="M624.4000000000001 556.6 L624.4000000000001 523.4000000000001 L626.2 525.2 L626.2 554.8000000000001Z" fill="#e0e0e0"/>
<path d="M626.2 525.2 L655.8000000000001 525.2 L652.4000000000001 528.6 L629.6 528.6Z" fill="#808080"/>
<path d="M655.8000000000001 525.2 L655.8000000000001 554.8000000000001 L652.4000000000001 551.4000000000001 L652.4000000000001 528.6Z" fill="#8c8c8c"/>
<path d="M655.8000000000001 554.8000000000001 L626.2 554.8000000000001 L629.6 551.4000000000001 L652.4000000000001 551.4000000000001Z" fill="#ffffff"/>
<path d="M626.2 554.8000000000001 L626.2 525.2 L629.6 528.6 L629.6 551.4000000000001Z" fill="#5a5a5a"/>
</g>
<rect x="622.2" y="521.2" width="37.6" height="37.6" rx="3.6" fill="none" stroke="#303030" stroke-width="1.1"/>
<clipPath id="bc9"><rect x="454.2" y="577.2" width="37.6" height="37.6" rx="3.6"/></clipPath>
<g clip-path="url(#bc9)">
<rect x="454.2" y="577.2" width="37.6" height="37.6" fill="#c7c6c4"/>
<path d="M454.2 577.2 L491.8 577.2 L486.40000000000003 582.6 L459.59999999999997 582.6Z" fill="#c7c6c4"/>
<path d="M491.8 577.2 L491.8 614.8000000000001 L486.40000000000003 609.4000000000001 L486.40000000000003 582.6Z" fill="#444444"/>
<path d="M491.8 614.8000000000001 L454.2 614.8000000000001 L459.59999999999997 609.4000000000001 L486.40000000000003 609.4000000000001Z" fill="#777777"/>
<path d="M454.2 614.8000000000001 L454.2 577.2 L459.59999999999997 582.6 L459.59999999999997 609.4000000000001Z" fill="#868686"/>
<path d="M459.59999999999997 582.6 L486.40000000000003 582.6 L485.2 583.8000000000001 L460.8 583.8000000000001Z" fill="#ffffff"/>
<path d="M486.40000000000003 582.6 L486.40000000000003 609.4000000000001 L485.2 608.2 L485.2 583.8000000000001Z" fill="#c7c6c4"/>
<path d="M486.40000000000003 609.4000000000001 L459.59999999999997 609.4000000000001 L460.8 608.2 L485.2 608.2Z" fill="#c7c6c4"/>
<path d="M459.59999999999997 609.4000000000001 L459.59999999999997 582.6 L460.8 583.8000000000001 L460.8 608.2Z" fill="#e8e8e8"/>
<rect x="463.4" y="586.4000000000001" width="19.200000000000003" height="19.200000000000003" fill="none" stroke="#8a8a8a" stroke-width=".8"/>
</g>
<rect x="454.2" y="577.2" width="37.6" height="37.6" rx="3.6" fill="none" stroke="#303030" stroke-width="1.1"/>
<clipPath id="bc10"><rect x="510.2" y="577.2" width="37.6" height="37.6" rx="3.6"/></clipPath>
<g clip-path="url(#bc10)">
<rect x="510.2" y="577.2" width="37.6" height="37.6" fill="#c7c6c4"/>
<path d="M510.2 577.2 L547.8 577.2 L543.4 581.6 L514.6 581.6Z" fill="#c7c6c4"/>
<path d="M547.8 577.2 L547.8 614.8000000000001 L543.4 610.4000000000001 L543.4 581.6Z" fill="#444444"/>
<path d="M547.8 614.8000000000001 L510.2 614.8000000000001 L514.6 610.4000000000001 L543.4 610.4000000000001Z" fill="#444444"/>
<path d="M510.2 614.8000000000001 L510.2 577.2 L514.6 581.6 L514.6 610.4000000000001Z" fill="#868686"/>
<path d="M514.6 581.6 L543.4 581.6 L542.1999999999999 582.8000000000001 L515.8 582.8000000000001Z" fill="#ffffff"/>
<path d="M543.4 581.6 L543.4 610.4000000000001 L542.1999999999999 609.2 L542.1999999999999 582.8000000000001Z" fill="#c7c6c4"/>
<path d="M543.4 610.4000000000001 L514.6 610.4000000000001 L515.8 609.2 L542.1999999999999 609.2Z" fill="#c7c6c4"/>
<path d="M514.6 610.4000000000001 L514.6 581.6 L515.8 582.8000000000001 L515.8 609.2Z" fill="#e8e8e8"/>
<rect x="519.4" y="586.4000000000001" width="19.200000000000003" height="19.200000000000003" fill="none" stroke="#929292" stroke-width=".8"/>
</g>
<rect x="510.2" y="577.2" width="37.6" height="37.6" rx="3.6" fill="none" stroke="#303030" stroke-width="1.1"/>
<clipPath id="bc11"><rect x="566.2" y="577.2" width="37.6" height="37.6" rx="3.6"/></clipPath>
<g clip-path="url(#bc11)">
<rect x="566.2" y="577.2" width="37.6" height="37.6" fill="#c7c6c4"/>
<path d="M566.2 577.2 L603.8000000000001 577.2 L602.6 578.4000000000001 L567.4000000000001 578.4000000000001Z" fill="#9a9a9a"/>
<path d="M603.8000000000001 577.2 L603.8000000000001 614.8000000000001 L602.6 613.6 L602.6 578.4000000000001Z" fill="#9a9a9a"/>
<path d="M603.8000000000001 614.8000000000001 L566.2 614.8000000000001 L567.4000000000001 613.6 L602.6 613.6Z" fill="#9a9a9a"/>
<path d="M566.2 614.8000000000001 L566.2 577.2 L567.4000000000001 578.4000000000001 L567.4000000000001 613.6Z" fill="#9a9a9a"/>
<path d="M570.8000000000001 581.8000000000001 L599.2 581.8000000000001 L597.2 583.8000000000001 L572.8000000000001 583.8000000000001Z" fill="#777777"/>
<path d="M599.2 581.8000000000001 L599.2 610.2 L597.2 608.2 L597.2 583.8000000000001Z" fill="#9a9a9a"/>
<path d="M599.2 610.2 L570.8000000000001 610.2 L572.8000000000001 608.2 L597.2 608.2Z" fill="#ffffff"/>
<path d="M570.8000000000001 610.2 L570.8000000000001 581.8000000000001 L572.8000000000001 583.8000000000001 L572.8000000000001 608.2Z" fill="#444444"/>
</g>
<rect x="566.2" y="577.2" width="37.6" height="37.6" rx="3.6" fill="none" stroke="#303030" stroke-width="1.1"/>
<clipPath id="bc12"><rect x="622.2" y="577.2" width="37.6" height="37.6" rx="3.6"/></clipPath>
<g clip-path="url(#bc12)">
<rect x="622.2" y="577.2" width="37.6" height="37.6" fill="#c7c6c4"/>
<path d="M622.2 577.2 L659.8000000000001 577.2 L657.8000000000001 579.2 L624.2 579.2Z" fill="#c7c6c4"/>
<path d="M659.8000000000001 577.2 L659.8000000000001 614.8000000000001 L657.8000000000001 612.8000000000001 L657.8000000000001 579.2Z" fill="#8a8a8a"/>
<path d="M659.8000000000001 614.8000000000001 L622.2 614.8000000000001 L624.2 612.8000000000001 L657.8000000000001 612.8000000000001Z" fill="#8a8a8a"/>
<path d="M622.2 614.8000000000001 L622.2 577.2 L624.2 579.2 L624.2 612.8000000000001Z" fill="#c7c6c4"/>
<path d="M624.2 579.2 L657.8000000000001 579.2 L655.6 581.4000000000001 L626.4000000000001 581.4000000000001Z" fill="#ffffff"/>
<path d="M657.8000000000001 579.2 L657.8000000000001 612.8000000000001 L655.6 610.6 L655.6 581.4000000000001Z" fill="#b0b0b0"/>
<path d="M657.8000000000001 612.8000000000001 L624.2 612.8000000000001 L626.4000000000001 610.6 L655.6 610.6Z" fill="#b0b0b0"/>
<path d="M624.2 612.8000000000001 L624.2 579.2 L626.4000000000001 581.4000000000001 L626.4000000000001 610.6Z" fill="#ffffff"/>
<path d="M626.4000000000001 581.4000000000001 L655.6 581.4000000000001 L654.6 582.4000000000001 L627.4000000000001 582.4000000000001Z" fill="#555"/>
<path d="M655.6 581.4000000000001 L655.6 610.6 L654.6 609.6 L654.6 582.4000000000001Z" fill="#777"/>
<path d="M655.6 610.6 L626.4000000000001 610.6 L627.4000000000001 609.6 L654.6 609.6Z" fill="#555"/>
<path d="M626.4000000000001 610.6 L626.4000000000001 581.4000000000001 L627.4000000000001 582.4000000000001 L627.4000000000001 609.6Z" fill="#555"/>
<path d="M627.4000000000001 582.4000000000001 L654.6 582.4000000000001 L651.2 585.8000000000001 L630.8000000000001 585.8000000000001Z" fill="#ffffff"/>
<path d="M654.6 582.4000000000001 L654.6 609.6 L651.2 606.2 L651.2 585.8000000000001Z" fill="#8a8a8a"/>
<path d="M654.6 609.6 L627.4000000000001 609.6 L630.8000000000001 606.2 L651.2 606.2Z" fill="#5a5a5a"/>
<path d="M627.4000000000001 609.6 L627.4000000000001 582.4000000000001 L630.8000000000001 585.8000000000001 L630.8000000000001 606.2Z" fill="#6a6a6a"/>
</g>
<rect x="622.2" y="577.2" width="37.6" height="37.6" rx="3.6" fill="none" stroke="#303030" stroke-width="1.1"/>
<clipPath id="bc0"><rect x="454.2" y="370.2" width="37.6" height="37.6" rx="4.2"/></clipPath>
<g clip-path="url(#bc0)">
<rect x="454.2" y="370.2" width="37.6" height="37.6" fill="#808080"/>
<rect x="454.2" y="400.2" width="5.4" height="8" fill="#555"/>
<rect x="485.8" y="400.2" width="6" height="8" fill="#fff"/>
<rect x="454.2" y="366.2" width="37.6" height="35.5" rx="4.2" fill="#c7c6c4" stroke="#3c3c3c" stroke-width="1"/>
</g>
<rect x="454.2" y="370.2" width="37.6" height="37.6" rx="4.2" fill="none" stroke="#3c3c3c" stroke-width="1"/>
</svg>
<div class="a" style="left:444px;top:633px;width:242px;height:1px;background:#d6d6d6"></div>
<div id="t38" class="t" style="left:482.4px;top:640.0px;height:18px;line-height:18px;font-size:12px;color:#222;transform:scaleX(0.9554);font-feature-settings:'palt' 1;">3-D オプション(<u>O</u>)...</div>
<div class="a" style="left:524px;top:556px;width:73px;height:24.3px;background:#fff;border:1px solid #b4b4b4;border-radius:4px;box-sizing:border-box"></div>
<div id="t39" class="t" style="left:528.5px;top:559.0px;height:18px;line-height:18px;font-size:12px;color:#5a5a5a;transform:scaleX(0.8597);font-feature-settings:'palt' 1;">ソフト ラウンド</div>
<svg width="704" height="686" viewBox="0 0 704 686">
<ellipse cx="374" cy="23.5" rx="45.5" ry="14.8" fill="none" stroke="#f40c12" stroke-width="2.4"/>
<ellipse cx="335" cy="104.3" rx="60.4" ry="16.6" fill="none" stroke="#f40c12" stroke-width="2.4"/>
<ellipse cx="345" cy="351" rx="58.8" ry="22" fill="none" stroke="#f40c12" stroke-width="2.4"/>
<circle cx="529" cy="539.5" r="29" fill="none" stroke="#f40c12" stroke-width="2.4"/>
<rect x="557.0" y="665.3" width="1.4" height="1.4" fill="#9bb4d6"/>
<rect x="561.6" y="665.3" width="1.4" height="1.4" fill="#9bb4d6"/>
<rect x="566.2" y="665.3" width="1.4" height="1.4" fill="#9bb4d6"/>
<rect x="570.8" y="665.3" width="1.4" height="1.4" fill="#9bb4d6"/>
<path d="M461.7 641.6 L457.4 646.2 L461.6 650.5 L466.2 646.3 L463.6 644.4" fill="none" stroke="#333" stroke-width="1.15" stroke-linejoin="round" stroke-linecap="round"/>
<path d="M461.7 642 V641.2 Q461.7 640.3 462.6 640.3 Q463.6 640.3 463.6 641.2 V645.4" fill="none" stroke="#333" stroke-width="1.15" stroke-linecap="round"/>
<path d="M465.8 643.6 Q468.4 644.2 468.2 647.2 Q467.4 645.4 465.6 645 Z" fill="#1a72c7" stroke="#1a72c7" stroke-width=".8" stroke-linejoin="round"/>
<path d="M472.6 646.2 L467.2 651.8" stroke="#333" stroke-width="2.6" stroke-linecap="round"/>
<path d="M472.4 646.4 L467.6 651.4" stroke="#f4f4f4" stroke-width="1" stroke-linecap="round"/>
<path d="M466.4 651 L468 652.6 Q466.8 656 463.6 655.8 Q461.6 655.6 460.4 654.4 Q464 654.2 466.4 651 Z" fill="#1a72c7"/>
</svg>
</body></html>
